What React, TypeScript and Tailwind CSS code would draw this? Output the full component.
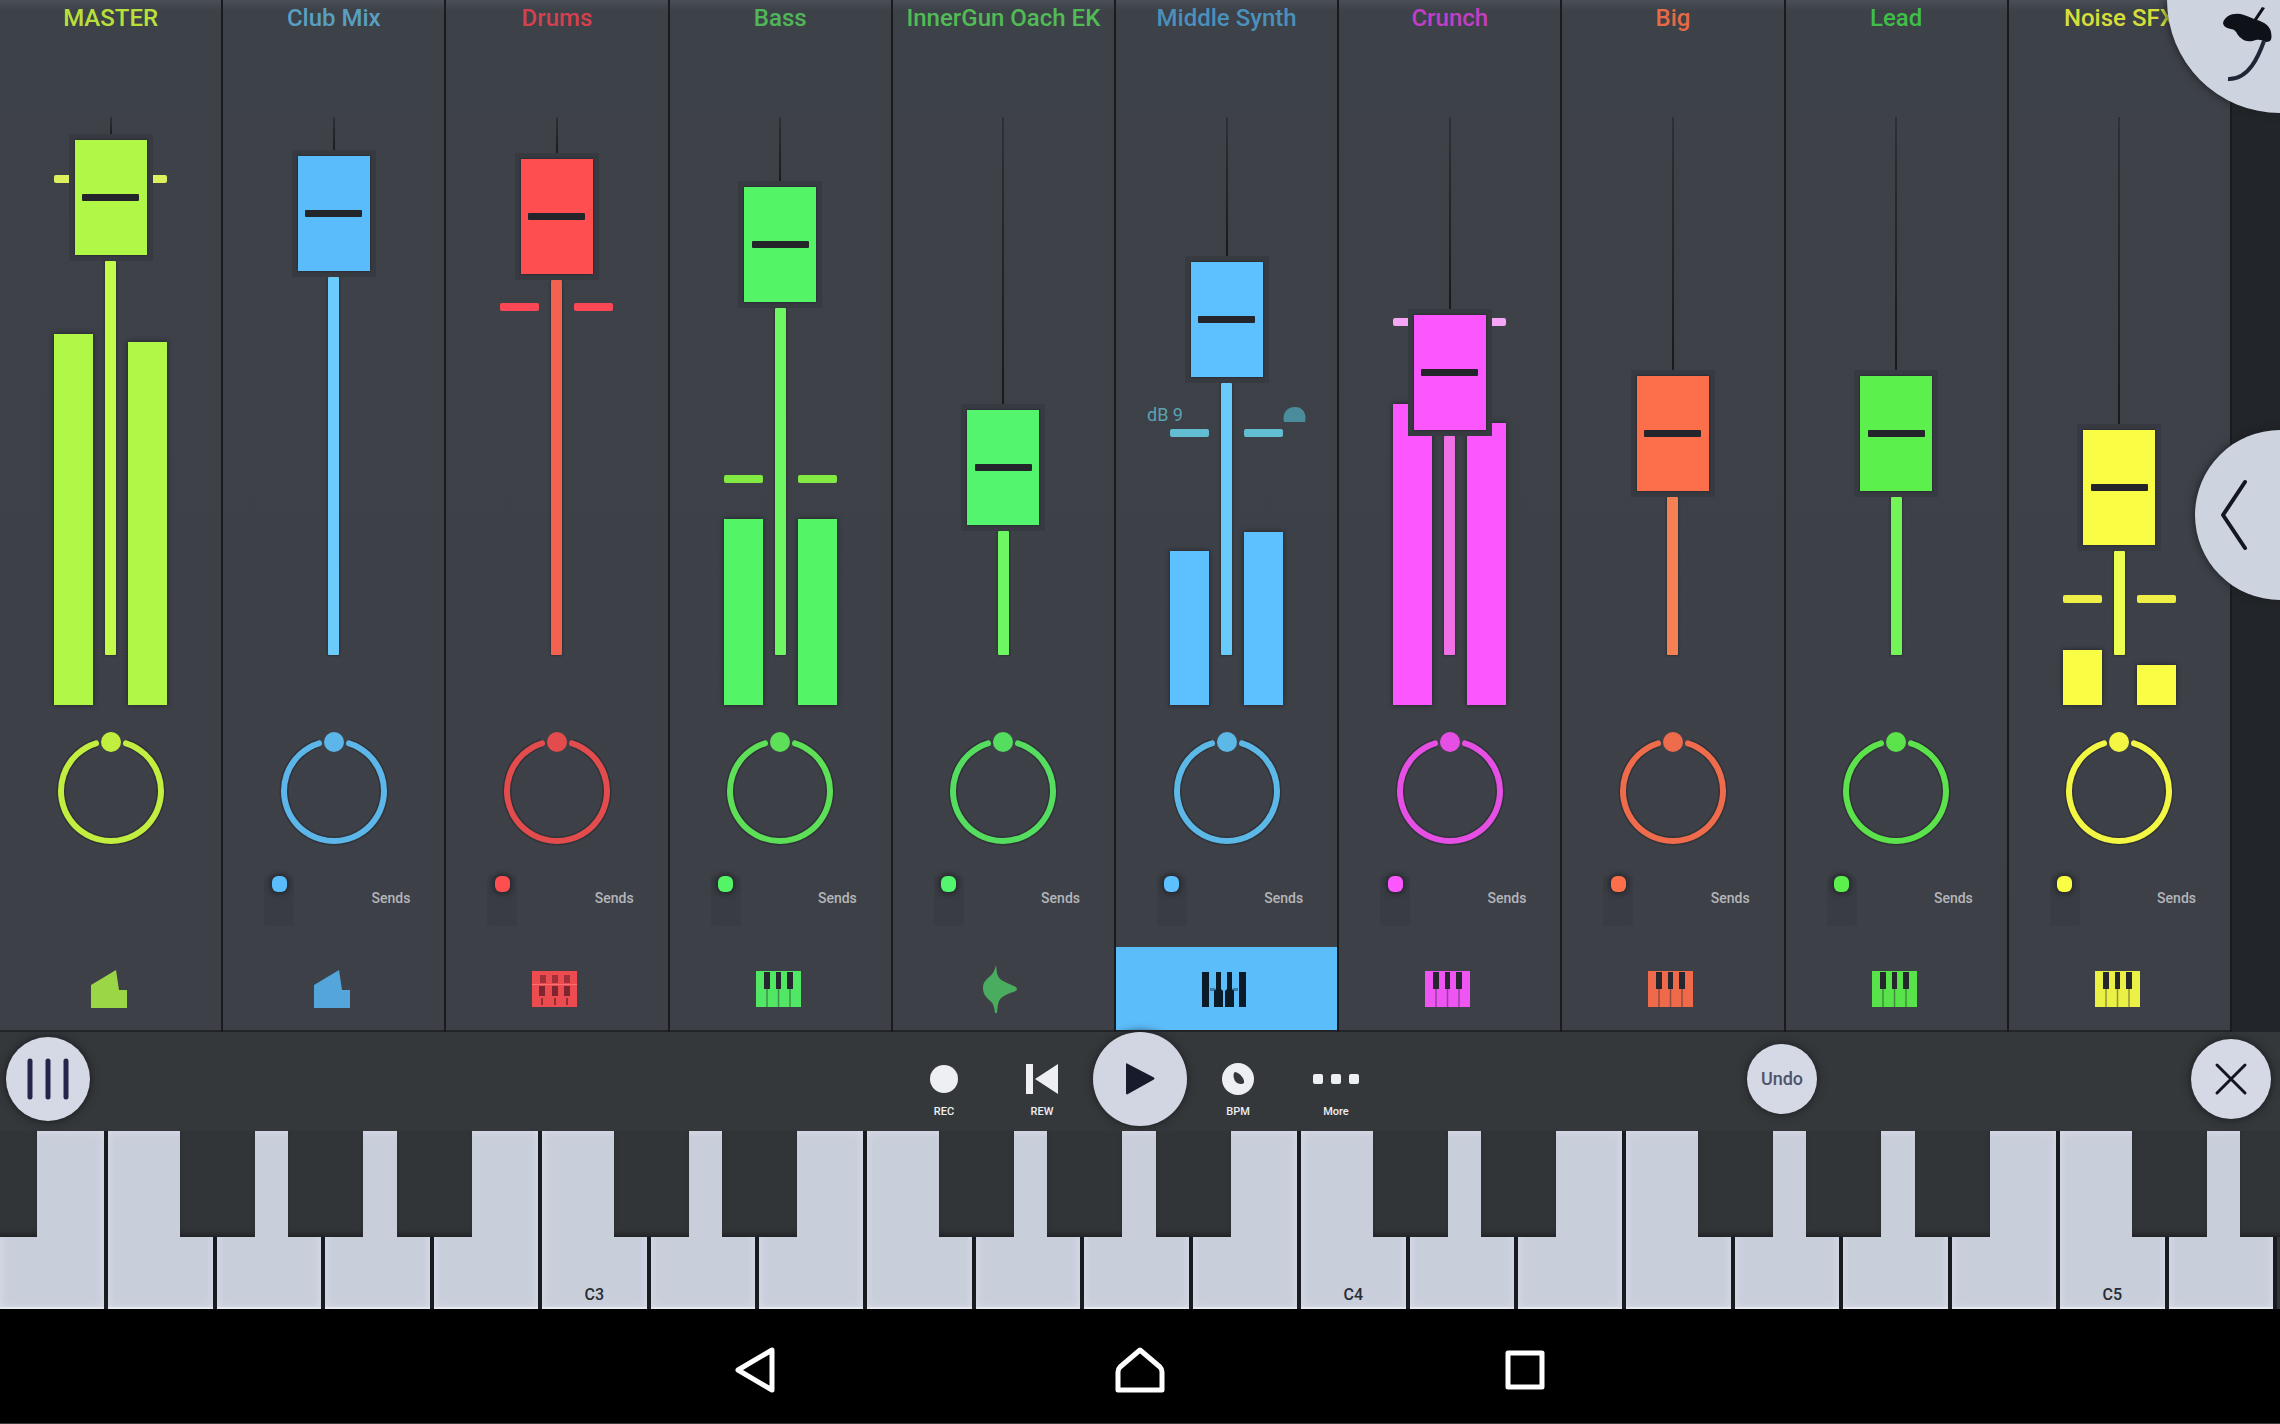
import React, { useState } from 'react';
import clsx from 'clsx';

type IconKind = 'bus' | 'pads' | 'piano' | 'wave';

interface Channel {
  name: string;
  icon: IconKind;
  level: number;
  meters?: [number, number];
  peak?: number;
  label: string;
  body: string;
  track: string;
  ring: string;
  mark: string;
}

// Distance in px that a fader cap can travel inside its lane
const TRAVEL = 473;

const CHANNELS: Channel[] = [
  { name: 'MASTER', icon: 'bus', level: 450, meters: [371, 363], peak: 58, label: 'text-[#b9e03a]', body: 'text-[#b0f746]', track: 'bg-[#c3fb4b]', ring: 'text-[#c2ee3f]', mark: 'bg-[#dcf05e]' },
  { name: 'Club Mix', icon: 'bus', level: 434, label: 'text-[#5a9fc0]', body: 'text-[#5abcfb]', track: 'bg-[#6ccbfa]', ring: 'text-[#5cb6ea]', mark: 'bg-[#6ccbfa]' },
  { name: 'Drums', icon: 'pads', level: 431, peak: 186, label: 'text-[#d5404f]', body: 'text-[#ff4e50]', track: 'bg-[#f3614f]', ring: 'text-[#e34c4c]', mark: 'bg-[#fb4854]' },
  { name: 'Bass', icon: 'piano', level: 403, meters: [186, 186], peak: 358, label: 'text-[#4fb758]', body: 'text-[#53f466]', track: 'bg-[#6cf763]', ring: 'text-[#5ddf57]', mark: 'bg-[#83ea43]' },
  { name: 'InnerGun Oach EK', icon: 'wave', level: 180, label: 'text-[#51bb55]', body: 'text-[#53f46e]', track: 'bg-[#6cf763]', ring: 'text-[#55dd60]', mark: 'bg-[#53f46e]' },
  { name: 'Middle Synth', icon: 'piano', level: 328, meters: [154, 173], peak: 312, label: 'text-[#4a90bb]', body: 'text-[#5dc0ff]', track: 'bg-[#69cbfc]', ring: 'text-[#5cb8e6]', mark: 'bg-[#62bcd2]' },
  { name: 'Crunch', icon: 'piano', level: 275, meters: [301, 282], peak: 201, label: 'text-[#c13fc5]', body: 'text-[#fc57ff]', track: 'bg-[#f070e5]', ring: 'text-[#e64fe4]', mark: 'bg-[#f5a6f5]' },
  { name: 'Big', icon: 'piano', level: 214, label: 'text-[#e56a45]', body: 'text-[#fd6e4b]', track: 'bg-[#f48054]', ring: 'text-[#ee6b4b]', mark: 'bg-[#fd6e4b]' },
  { name: 'Lead', icon: 'piano', level: 214, label: 'text-[#3fbf47]', body: 'text-[#5bf04b]', track: 'bg-[#73f558]', ring: 'text-[#5ce34c]', mark: 'bg-[#5bf04b]' },
  { name: 'Noise SFX', icon: 'piano', level: 160, meters: [55, 40], peak: 478, label: 'text-[#d6df3a]', body: 'text-[#f9fe45]', track: 'bg-[#ecfe4f]', ring: 'text-[#f3f743]', mark: 'bg-[#eef048]' },
];

const SELECTED = 5;

// Key borders (counted from the left edge) that carry a black key
const BLACK_KEYS = [2, 3, 4, 6, 7, 9, 10, 11, 13, 14, 16, 17, 18, 20, 21];
const KEY_LABELS: Record<number, string> = { 5: 'C3', 12: 'C4', 19: 'C5' };

function ChannelIcon({ kind, selected }: { kind: IconKind; selected: boolean }) {
  if (kind === 'bus') {
    return (
      <svg width="36" height="38" viewBox="0 0 36 38" fill="currentColor" opacity="0.82">
        <path d="M0 15 25 0l3 20h8v18H0z" />
      </svg>
    );
  }
  if (kind === 'wave') {
    return (
      <svg width="36" height="48" viewBox="0 0 36 48" fill="currentColor" opacity="0.6">
        <path d="M13 0c1 8 1 13 7 16 7 4 14 5 14 8s-7 3-13 7c-6 3-6 8-7 17h-2c-1-8-2-10-6-13C2 31 0 28 0 23s2-7 5-10c5-4 6-6 8-13z" />
      </svg>
    );
  }
  if (kind === 'pads') {
    return (
      <svg width="45" height="36" viewBox="0 0 45 36">
        <rect width="45" height="36" fill="currentColor" opacity="0.9" />
        <g fill="#7d2630">
          <path d="M8 4h6v8H8zM20 4h6v8h-6zM32 4h6v8h-6z" opacity="0.7" />
          <path d="M7 15h6v10H7zM20 15h6v10h-6zM32 15h6v10h-6z" />
          <path d="M9 27h2v7H9zM22 27h2v7h-2zM34 27h2v7h-2z" opacity="0.8" />
        </g>
        <path d="M0 13.500h45" stroke="#ff7070" />
      </svg>
    );
  }
  if (selected) {
    return (
      <svg width="45" height="36" viewBox="0 0 45 36" fill="#0b1c28">
        <path d="M0 1h7v35H0zM37 1h7v35h-7zM14 1h5v17l2 2v16h-9V20l2-2zM25 1h5v17l2 2v16h-9V20l2-2z" />
        <path d="M8 17h5v3H8zM31 17h5v3h-5z" opacity="0.4" />
      </svg>
    );
  }
  return (
    <svg width="45" height="36" viewBox="0 0 45 36">
      <rect width="45" height="36" fill="currentColor" opacity="0.93" />
      <path d="M8 1h6v17H8zM20 1h5v17h-5zM31 1h6v17h-6z" fill="#26262e" />
      <path d="M11 18v18M22.500 18v18M34 18v18" stroke="#26262e" strokeOpacity="0.45" strokeWidth="1.500" />
    </svg>
  );
}

function Fader({ channel }: { channel: Channel }) {
  const [level, setLevel] = useState(channel.level);
  const top = TRAVEL - level;

  return (
    <div className={clsx('relative mt-[81px] flex h-[588px] items-end justify-center gap-[35px]', channel.body)}>
      {/* lane */}
      <div className="absolute inset-x-0 top-0 mx-auto w-[2px] bg-gradient-to-b from-[#2d3036] to-[#17191c]" style={{ height: top }}></div>
      <div className={clsx('absolute inset-x-0 bottom-[50px] mx-auto w-[11px] rounded-[1px] shadow-[0_0_3px_#202227]', channel.track)} style={{ top: top + 121 }}></div>

      {channel.meters?.map((height, i) => (
        <div key={i} className="w-[39px] bg-current shadow-[0_0_5px_#1f2127]" style={{ height }}></div>
      ))}

      {channel.peak !== undefined && (
        <div className="absolute inset-x-0 flex justify-center gap-[35px]" style={{ top: channel.peak }}>
          <span className={clsx('h-2 w-[39px] rounded-[2px]', channel.mark)}></span>
          <span className={clsx('h-2 w-[39px] rounded-[2px]', channel.mark)}></span>
        </div>
      )}

      {channel.name === 'Middle Synth' && (
        <div className="absolute inset-x-[31px] top-[290px] flex h-4 items-center justify-between text-[#5ba3b0]">
          <span className="text-lg leading-4">dB 9</span>
          <svg width="23" height="16" viewBox="0 0 23 16" fill="#4b8c9c">
            <path d="M1 15C-1 6 4 0 12 0s12 7 10 15z" />
          </svg>
        </div>
      )}

      <div
        className="absolute inset-x-0 mx-auto flex h-[115px] w-[72px] items-center justify-center bg-current shadow-[0_0_2px_#1c1e22,0_0_0_6px_#373a41]"
        style={{ top }}
      >
        <span className="h-[7px] w-[57px] rounded-[1px] bg-[#24242b]"></span>
      </div>

      <input
        type="range"
        min={0}
        max={TRAVEL}
        value={level}
        onChange={e => setLevel(Number(e.target.value))}
        aria-label={`${channel.name} volume`}
        className="absolute inset-0 mx-auto h-full w-[112px] cursor-pointer opacity-0 [direction:rtl] [writing-mode:vertical-lr]"
      />
    </div>
  );
}

function PanKnob({ channel }: { channel: Channel }) {
  const [pan, setPan] = useState(0);

  return (
    <div className={clsx('relative mx-auto mt-[25px] h-[116px] w-28', channel.ring)}>
      <svg width="112" height="116" viewBox="0 0 112 116" fill="none" style={{ rotate: `${pan}deg` }}>
        <path d="M71 13.300a50 50 0 1 1-30 0" stroke="#24262c" strokeWidth="9" opacity="0.5" />
        <path d="M71 13.300a50 50 0 1 1-30 0" stroke="currentColor" strokeWidth="6" strokeLinecap="round" />
        <circle cx="56" cy="12" r="10" fill="currentColor" />
      </svg>
      <input
        type="range"
        min={-140}
        max={140}
        value={pan}
        onChange={e => setPan(Number(e.target.value))}
        aria-label={`${channel.name} pan`}
        className="absolute inset-0 h-full w-full cursor-pointer opacity-0"
      />
    </div>
  );
}

function ChannelStrip({ channel, selected, master, onSelect }: { channel: Channel; selected: boolean; master: boolean; onSelect: () => void }) {
  const [muted, setMuted] = useState(false);

  return (
    <section className="flex min-w-0 flex-col border-r-2 border-[#191b20] bg-gradient-to-b from-[#4a4e57] via-[#3d4148] via-[1%] to-[#3d4047]">
      <h2 className={clsx('text-center text-2xl leading-9 font-medium whitespace-nowrap', channel.label)}>{channel.name}</h2>

      <Fader channel={channel} />
      <PanKnob channel={channel} />

      <div className="mt-[30px] flex h-[50px] items-start justify-between pr-[34px] pl-[41px]">
        {!master && (
          <>
            <button
              type="button"
              aria-label={`Mute ${channel.name}`}
              aria-pressed={muted}
              onClick={() => setMuted(!muted)}
              className={clsx('flex h-full w-[30px] justify-center rounded-sm bg-[#393c43]', channel.body)}
            >
              <span className={clsx('h-4 w-[15px] rounded-[6px] bg-current shadow-[0_0_5px_2px_#25272d]', muted && 'opacity-30')}></span>
            </button>
            <span className="pt-3 text-sm leading-5 font-medium text-[#b4b6ba]">Sends</span>
          </>
        )}
      </div>

      <button
        type="button"
        onClick={onSelect}
        aria-label={`Open ${channel.name}`}
        className={clsx('mt-[21px] flex h-[85px] items-center justify-center border-b-2 border-[#222428] pr-1', channel.body, selected && 'bg-[#5cbdfb]')}
      >
        <ChannelIcon kind={channel.icon} selected={selected} />
      </button>
    </section>
  );
}

function TransportButton({ label, children }: { label: string; children: React.ReactNode }) {
  return (
    <button type="button" className="flex h-[94px] w-[98px] flex-col items-center gap-[11px] pt-[31px] text-[#eeeff2]">
      <span className="flex h-8 items-center">{children}</span>
      <span className="text-[11px] leading-3 font-medium">{label}</span>
    </button>
  );
}

function Transport() {
  return (
    <div className="grid h-[99px] grid-cols-[1fr_auto_1fr] items-start bg-[#35383b]">
      <div className="flex h-[94px] items-center pl-[6px]">
        <button type="button" aria-label="Menu" className="flex size-[84px] items-center justify-center rounded-full bg-[#d5d9e5] shadow-[0_0_10px_#16181c]">
          <svg width="44" height="44" viewBox="0 0 44 44" fill="none" stroke="#23264a" strokeWidth="5" strokeLinecap="round">
            <path d="M4 4v36M22 4v36M40 4v36" />
          </svg>
        </button>
      </div>

      <div className="flex">
        <TransportButton label="REC">
          <span className="size-7 rounded-full bg-current"></span>
        </TransportButton>
        <TransportButton label="REW">
          <svg width="34" height="30" viewBox="0 0 34 30" fill="currentColor">
            <path d="M1 0h7v30H1zM33 0v30L10 15z" />
          </svg>
        </TransportButton>
        <button type="button" aria-label="Play" className="relative mx-[2px] flex size-[94px] items-center justify-center rounded-full bg-[#d2d6e2] shadow-[0_0_8px_#1b1d21]">
          <svg width="30" height="32" viewBox="0 0 30 32" fill="#171b2b">
            <path d="M1 1c0-1 1-1 2 0l25 13c2 1 2 2 0 3L3 31c-1 1-2 0-2-1z" />
          </svg>
        </button>
        <TransportButton label="BPM">
          <svg width="32" height="32" viewBox="0 0 32 32" fill="currentColor">
            <circle cx="16" cy="16" r="16" />
            <path d="M13 9c5 1 10 7 9 11-2 2-7 1-9-2-2-4-2-8 0-9z" fill="#35383b" />
          </svg>
        </TransportButton>
        <TransportButton label="More">
          <svg width="46" height="10" viewBox="0 0 46 10" fill="currentColor">
            <rect width="10" height="10" rx="2" />
            <rect x="18" width="10" height="10" rx="2" />
            <rect x="36" width="10" height="10" rx="2" />
          </svg>
        </TransportButton>
      </div>

      <div className="flex h-[94px] items-center justify-between pr-[9px] pl-[362px]">
        <button type="button" className="flex size-[70px] items-center justify-center rounded-full bg-[#d5d9e5] text-lg font-medium text-[#4e536b] shadow-[0_0_10px_#1b1d21]">
          Undo
        </button>
        <button type="button" aria-label="Close" className="flex size-20 items-center justify-center rounded-full bg-[#d5d9e5] shadow-[0_0_10px_#16181c]">
          <svg width="34" height="34" viewBox="0 0 34 34" stroke="#14161f" strokeWidth="3" strokeLinecap="round">
            <path d="m3 3 28 28M31 3 3 31" />
          </svg>
        </button>
      </div>
    </div>
  );
}

function BlackKey({ side }: { side: 'left' | 'right' }) {
  return (
    <button
      type="button"
      aria-label="Black key"
      className={clsx(
        'absolute top-0 z-10 h-[106px] w-[75px] bg-[#323538] shadow-[inset_0_-5px_6px_-3px_#1c1e21]',
        side === 'left' ? '-left-[38px]' : '-right-[38px]'
      )}
    ></button>
  );
}

function Keyboard() {
  return (
    <div className="grid h-[178px] grid-cols-[repeat(21,minmax(0,1fr))] overflow-hidden bg-[#323538] pr-[3px]">
      {Array.from({ length: 21 }, (_, i) => (
        <div key={i} className="relative">
          {i === 0 && <BlackKey side="left" />}
          <button
            type="button"
            aria-label={KEY_LABELS[i] ? undefined : `White key ${i + 1}`}
            className="flex h-full w-full items-end justify-center border-r-4 border-[#181b20] bg-[#c9cedb] pb-1 text-base leading-5 font-medium text-[#272b33] shadow-[inset_0_0_8px_#dde0ec,inset_0_-2px_0_#eef0f6]"
          >
            {KEY_LABELS[i]}
          </button>
          {BLACK_KEYS.includes(i + 1) && <BlackKey side="right" />}
        </div>
      ))}
    </div>
  );
}

function SystemBar() {
  return (
    <nav className="flex flex-1 items-center justify-center border-b border-[#3a3a3a] bg-black text-white">
      <button type="button" aria-label="Back" className="flex h-[114px] w-[385px] items-center justify-center pt-2">
        <svg width="42" height="48" viewBox="0 0 42 48" fill="none" stroke="currentColor" strokeWidth="5" strokeLinejoin="round">
          <path d="M38 4v40L4 24z" />
        </svg>
      </button>
      <button type="button" aria-label="Home" className="flex h-[114px] w-[385px] items-center justify-center pt-2">
        <svg width="50" height="48" viewBox="0 0 50 48" fill="none" stroke="currentColor" strokeWidth="5" strokeLinejoin="round">
          <path d="M25 4 5 21q-2 2-2 5v18h44V26q0-3-2-5z" />
        </svg>
      </button>
      <button type="button" aria-label="Recent apps" className="flex h-[114px] w-[385px] items-center justify-center pt-2">
        <svg width="42" height="40" viewBox="0 0 42 40" fill="none" stroke="currentColor" strokeWidth="5" strokeLinejoin="round">
          <path d="M4 3h34v34H4z" />
        </svg>
      </button>
    </nav>
  );
}

export default function App() {
  const [selected, setSelected] = useState(SELECTED);

  return (
    <div className="flex min-h-screen flex-col overflow-hidden bg-black font-[Roboto,sans-serif]">
      <main className="relative grid grid-cols-[repeat(10,minmax(0,1fr))] bg-[#222529] pr-[48px]">
        {CHANNELS.map((channel, i) => (
          <ChannelStrip
            key={channel.name}
            channel={channel}
            master={i === 0}
            selected={i === selected}
            onSelect={() => setSelected(i)}
          />
        ))}

        <button type="button" aria-label="Main menu" className="absolute top-0 right-0 size-[113px] rounded-bl-full bg-[#ced3e0] shadow-[0_0_8px_#1b1d21]">
          <svg width="113" height="113" viewBox="0 0 113 113">
            <path d="M56 23c2-8 12-11 21-8 4 1 7 3 10 4l8-12 3 1-8 12c7 2 13 6 14 12s1 10-5 10c-3-1-6-3-10-2-6 2-11 2-15-2-4-3-4-6-7-8-4-2-10-1-11-7z" fill="#0e1118" />
            <path d="M97 41C92 55 82 80 61 79" fill="none" stroke="#1f2636" strokeWidth="4" />
          </svg>
        </button>

        <button type="button" aria-label="Open side panel" className="absolute top-[430px] right-0 flex h-[170px] w-[85px] items-center rounded-l-full bg-[#ced3e0] pl-6 shadow-[0_0_8px_#1b1d21]">
          <svg width="30" height="72" viewBox="0 0 30 72" fill="none" stroke="#141720" strokeWidth="4" strokeLinecap="round" strokeLinejoin="round">
            <path d="M26 3 4 36l22 33" />
          </svg>
        </button>
      </main>

      <Transport />
      <Keyboard />
      <SystemBar />
    </div>
  );
}
